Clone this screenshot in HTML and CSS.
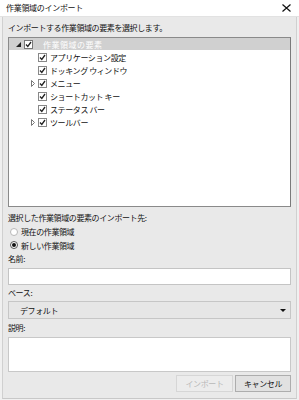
FILE: index.html
```html
<!DOCTYPE html>
<html lang="ja">
<head>
<meta charset="utf-8">
<link rel="stylesheet" href="styles.css">
</head>
<body>
<div class="window">
  <div class="titlebar">
    <span class="title">作業領域のインポート</span>
    <svg class="close" width="9" height="8" viewBox="0 0 9 8"><path d="M0.5 0.5 L8.5 7.5 M8.5 0.5 L0.5 7.5" stroke="#111" stroke-width="1.2" fill="none"/></svg>
  </div>
  <div class="client">
    <div class="label l1">インポートする作業領域の要素を選択します。</div>
    <div class="tree">
      <div class="trow header">
        <svg class="exp-root" width="5" height="5" viewBox="0 0 5 5"><polygon points="5,0 5,5 0,5" fill="#222"/></svg>
        <span class="cb"><svg width="9" height="9" viewBox="0 0 9 9"><rect x="0.5" y="0.5" width="8" height="8" fill="#fff" stroke="#777"/><path d="M2 4.5 L3.8 6.5 L7 2" stroke="#222" stroke-width="1.3" fill="none"/></svg></span>
        <span class="htext">作業領域の要素</span>
      </div>
      <div class="trow item"><span class="exp"></span><span class="cb"><svg width="9" height="9" viewBox="0 0 9 9"><rect x="0.5" y="0.5" width="8" height="8" fill="#fff" stroke="#888"/><path d="M2 4.5 L3.8 6.5 L7 2" stroke="#222" stroke-width="1.3" fill="none"/></svg></span><span>アプリケーション設定</span></div>
      <div class="trow item"><span class="exp"></span><span class="cb"><svg width="9" height="9" viewBox="0 0 9 9"><rect x="0.5" y="0.5" width="8" height="8" fill="#fff" stroke="#888"/><path d="M2 4.5 L3.8 6.5 L7 2" stroke="#222" stroke-width="1.3" fill="none"/></svg></span><span>ドッキング ウィンドウ</span></div>
      <div class="trow item"><span class="exp"><svg width="4" height="7" viewBox="0 0 4 7"><polygon points="0.5,0.5 3.5,3.5 0.5,6.5" fill="#fff" stroke="#777"/></svg></span><span class="cb"><svg width="9" height="9" viewBox="0 0 9 9"><rect x="0.5" y="0.5" width="8" height="8" fill="#fff" stroke="#888"/><path d="M2 4.5 L3.8 6.5 L7 2" stroke="#222" stroke-width="1.3" fill="none"/></svg></span><span>メニュー</span></div>
      <div class="trow item"><span class="exp"></span><span class="cb"><svg width="9" height="9" viewBox="0 0 9 9"><rect x="0.5" y="0.5" width="8" height="8" fill="#fff" stroke="#888"/><path d="M2 4.5 L3.8 6.5 L7 2" stroke="#222" stroke-width="1.3" fill="none"/></svg></span><span>ショートカット キー</span></div>
      <div class="trow item"><span class="exp"></span><span class="cb"><svg width="9" height="9" viewBox="0 0 9 9"><rect x="0.5" y="0.5" width="8" height="8" fill="#fff" stroke="#888"/><path d="M2 4.5 L3.8 6.5 L7 2" stroke="#222" stroke-width="1.3" fill="none"/></svg></span><span>ステータス バー</span></div>
      <div class="trow item"><span class="exp"><svg width="4" height="7" viewBox="0 0 4 7"><polygon points="0.5,0.5 3.5,3.5 0.5,6.5" fill="#fff" stroke="#777"/></svg></span><span class="cb"><svg width="9" height="9" viewBox="0 0 9 9"><rect x="0.5" y="0.5" width="8" height="8" fill="#fff" stroke="#888"/><path d="M2 4.5 L3.8 6.5 L7 2" stroke="#222" stroke-width="1.3" fill="none"/></svg></span><span>ツールバー</span></div>
    </div>
    <div class="label l2">選択した作業領域の要素のインポート先:</div>
    <div class="radio r1"><span class="rb"></span><span>現在の作業領域</span></div>
    <div class="radio r2"><span class="rb on"></span><span>新しい作業領域</span></div>
    <div class="label l3">名前:</div>
    <div class="input"></div>
    <div class="label l4">ベース:</div>
    <div class="select"><span>デフォルト</span><svg width="6" height="3" viewBox="0 0 6 3"><polygon points="0,0 6,0 3,3" fill="#111"/></svg></div>
    <div class="label l5">説明:</div>
    <div class="textarea"></div>
    <div class="buttons">
      <div class="btn disabled">インポート</div>
      <div class="btn cancel">キャンセル</div>
    </div>
  </div>
</div>
</body>
</html>
```

FILE: styles.css
```css
* { box-sizing: border-box; }
html, body { margin: 0; padding: 0; }
body {
  width: 299px;
  height: 400px;
  overflow: hidden;
  background: #f0f0f0;
  font-family: "Noto Sans CJK JP", "Noto Sans", sans-serif;
  font-size: 8px;
  color: #111;
}
.window {
  width: 299px;
  height: 400px;
  display: flex;
  flex-direction: column;
}
.titlebar {
  height: 17px;
  background: #fff;
  display: flex;
  align-items: center;
  justify-content: space-between;
  padding: 0 8px 1px 6px;
  border-bottom: 1px solid #e2e2e2;
}
.title { font-size: 8px; letter-spacing: -0.3px; }
.close { display: block; }
.client {
  height: 382px;
  margin: 0 2px 0 2px;
  background: #e9e9e9;
  border-left: 1px solid #d0d0d0;
  border-right: 1px solid #d0d0d0;
  border-bottom: 1px solid #c8c8c8;
  padding: 0 5px 0 5px;
  display: flex;
  flex-direction: column;
}
.label {
  height: 14px;
  line-height: 14px;
  white-space: nowrap;
  letter-spacing: -0.4px;
}
.l1 { margin-top: 2px; height: 18px; line-height: 18px; }
.tree {
  height: 170px;
  background: #fff;
  border: 1px solid #8a8a8a;
  border-right-color: #7a7a7a;
  display: flex;
  flex-direction: column;
}
.trow {
  display: flex;
  align-items: center;
  white-space: nowrap;
  letter-spacing: -0.4px;
}
.header {
  height: 12px;
  background: #d0d0d0;
  padding-left: 7px;
}
.exp-root { display: block; margin-right: 3px; margin-top: 1px; }
.cb { display: flex; width: 9px; height: 9px; }
.cb svg { display: block; }
.htext { color: #fff; margin-left: 10px; letter-spacing: 0.5px; }
.item {
  height: 13px;
  padding-left: 22px;
}
.item:nth-child(2) { margin-top: 1px; }
.exp {
  width: 7px;
  height: 7px;
  display: flex;
  align-items: center;
}
.exp svg { display: block; }
.item .cb { margin-right: 3px; }
.l2 { margin-top: 4px; }
.radio {
  height: 13.5px;
  display: flex;
  align-items: center;
  letter-spacing: -0.4px;
}
.rb {
  width: 8px;
  height: 8px;
  border-radius: 50%;
  background: #fff;
  border: 1px solid #b8b8b8;
  margin: 0 3px 0 2px;
  position: relative;
}
.rb.on { border-color: #555; }
.rb.on::after {
  content: "";
  position: absolute;
  left: 1px;
  top: 1px;
  width: 4px;
  height: 4px;
  border-radius: 50%;
  background: #111;
}
.input {
  height: 17px;
  margin-top: 2px;
  background: #fff;
  border: 1px solid #c4c4c4;
}
.l4 { margin-top: 1px; }
.select {
  height: 18px;
  margin-top: 1px;
  background: #e6e6e6;
  border: 1px solid #c6c6c6;
  display: flex;
  align-items: center;
  justify-content: space-between;
  padding: 0 4px 0 11px;
  letter-spacing: -0.4px;
}
.select svg { display: block; }
.l5 { margin-top: 2px; }
.textarea {
  height: 35px;
  margin-top: 2px;
  background: #fff;
  border: 1px solid #c8c8c8;
}
.buttons {
  margin-top: 3px;
  display: flex;
  justify-content: flex-end;
  gap: 2px;
}
.btn {
  height: 17px;
  display: flex;
  align-items: center;
  justify-content: center;
  letter-spacing: -0.4px;
}
.disabled {
  width: 57px;
  background: #ececec;
  border: 1px solid #d6d6d6;
  color: #b8b8b8;
}
.cancel {
  width: 56px;
  background: #e1e1e1;
  border: 1px solid #adadad;
  color: #111;
}
```
